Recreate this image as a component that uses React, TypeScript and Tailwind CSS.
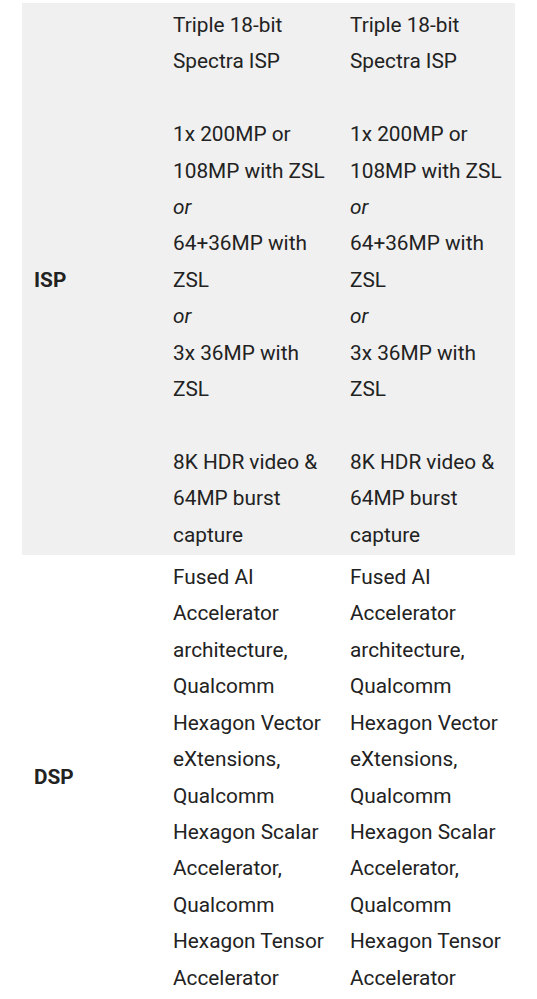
const ispLines: (string | null)[] = [
  "Triple 18-bit",
  "Spectra ISP",
  null,
  "1x 200MP or",
  "108MP with ZSL",
  "*or",
  "64+36MP with",
  "ZSL",
  "*or",
  "3x 36MP with",
  "ZSL",
  null,
  "8K HDR video &",
  "64MP burst",
  "capture",
];

const dspLines: (string | null)[] = [
  "Fused AI",
  "Accelerator",
  "architecture,",
  "Qualcomm",
  "Hexagon Vector",
  "eXtensions,",
  "Qualcomm",
  "Hexagon Scalar",
  "Accelerator,",
  "Qualcomm",
  "Hexagon Tensor",
  "Accelerator",
];

const Cell = ({ lines }: { lines: (string | null)[] }) => (
  <div className="px-3 pt-[4px] pb-[2px]">
    {lines.map((l, i) =>
      l === null ? (
        <div key={i} className="h-[36.4px]" />
      ) : l.startsWith("*") ? (
        <div key={i} className="italic whitespace-nowrap">
          {l.slice(1)}
        </div>
      ) : (
        <div key={i} className="whitespace-nowrap">
          {l}
        </div>
      )
    )}
  </div>
);

const Row = ({
  label,
  lines,
  shaded,
}: {
  label: string;
  lines: (string | null)[];
  shaded?: boolean;
}) => (
  <div
    className={`grid grid-cols-[139px_177px_177px] ${shaded ? "bg-[#f0f0f0]" : "bg-white"}`}
  >
    <div className="flex items-center px-3 pt-[2px] font-bold">{label}</div>
    <Cell lines={lines} />
    <Cell lines={lines} />
  </div>
);

export default function App() {
  return (
    <div className="w-[537px] h-[999px] overflow-hidden bg-white pt-[3px] pl-[22px] font-['Roboto',sans-serif] text-[20.8px] leading-[36.4px] text-[#222]">
      <div className="w-[493px]">
        <Row label="ISP" lines={ispLines} shaded />
        <Row label="DSP" lines={dspLines} />
      </div>
    </div>
  );
}
